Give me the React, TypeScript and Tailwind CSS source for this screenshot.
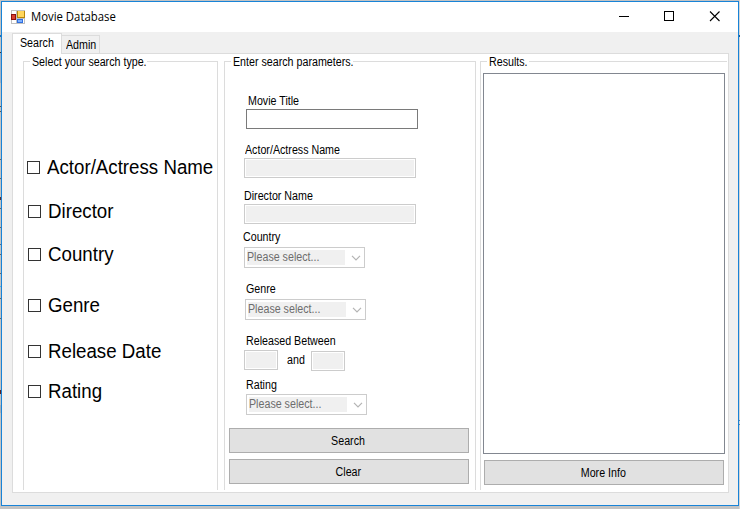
import React from "react";

function Txt({ children }: { children: React.ReactNode }) {
  return <span className="inline-block origin-left scale-x-[0.89]">{children}</span>;
}

function Check({ label, className }: { label: string; className: string }) {
  return (
    <label className={`flex h-[25px] items-center text-[20px] leading-[25px] whitespace-nowrap ${className}`}>
      <span className="mr-[7px] h-[13px] w-[13px] shrink-0 border border-[#333333] bg-white" />
      <span className="inline-block origin-left scale-x-[0.935]">{label}</span>
    </label>
  );
}

function Label({ text, className }: { text: string; className: string }) {
  return (
    <div className={`h-[13px] leading-[13px] whitespace-nowrap ${className}`}>
      <Txt>{text}</Txt>
    </div>
  );
}

function DisabledInput({ className }: { className: string }) {
  return (
    <div className={`h-[20px] border border-[#cccccc] bg-white p-px ${className}`}>
      <div className="h-full bg-[#f0f0f0]" />
    </div>
  );
}

function Select({ className }: { className: string }) {
  return (
    <div className={`flex h-[21px] w-[121px] items-center border border-[#cccccc] bg-white pl-[2px] ${className}`}>
      <div className="h-[15px] w-[98px] bg-[#f0f0f0] leading-[14px] whitespace-nowrap text-[#6d6d6d]">
        <Txt>Please select...</Txt>
      </div>
      <svg className="ml-[6px]" width="10" height="6" viewBox="0 0 10 6" fill="none" stroke="#b4b4b4" strokeWidth="1.2">
        <path d="M1 0.8 L5 4.8 L9 0.8" />
      </svg>
    </div>
  );
}

function Button({ label, className }: { label: string; className: string }) {
  return (
    <button
      className={`flex h-[25px] w-[240px] items-center justify-center border border-[#adadad] bg-[#e1e1e1] pt-[2px] pr-[2px] leading-[13px] ${className}`}
    >
      <span className="inline-block scale-x-[0.89]">{label}</span>
    </button>
  );
}

export default function App() {
  return (
    <div className="flex h-[509px] w-[740px] bg-[#c3c3c3] font-['Liberation_Sans',Arial,sans-serif] text-[12px] text-black">
      {/* slivers of the windows behind, visible along the edges */}
      <div className="w-px shrink-0">
        <div className="mt-[35px] h-[2px] bg-[#1f6fb5]" />
        <div className="mt-[15px] h-px bg-[#333333]" />
        <div className="h-[30px] bg-[#9fb0c4]" />
        <div className="mt-[23px] h-px bg-[#555555]" />
        <div className="mt-[4px] h-px bg-[#555555]" />
        <div className="mt-[47px] h-px bg-[#666666]" />
        <div className="mt-[18px] h-px bg-[#666666]" />
        <div className="mt-[18px] h-[3px] bg-[#5a3030]" />
        <div className="mt-[8px] h-px bg-[#666666]" />
        <div className="mt-[18px] h-px bg-[#666666]" />
        <div className="mt-[16px] h-px bg-[#4a6f90]" />
        <div className="mt-[9px] h-px bg-[#666666]" />
        <div className="mt-[18px] h-px bg-[#666666]" />
        <div className="mt-[12px] h-px bg-[#4fb0e8]" />
        <div className="mt-[11px] h-px bg-[#666666]" />
        <div className="mt-[19px] h-px bg-[#666666]" />
        <div className="mt-[71px] h-[4px] bg-[#5a2020]" />
        <div className="mt-[11px] h-[8px] bg-[#a9b0b8]" />
      </div>
      <div className="mt-px flex h-[505px] w-[738px] shrink-0 flex-col border border-[#1883d7] bg-[#f0f0f0]">
        <div className="flex h-[30px] shrink-0 items-center bg-white pl-[9px]">
          <svg width="14" height="14" viewBox="0 0 14 14" shapeRendering="crispEdges">
            <rect width="14" height="14" fill="#c0c0c0" />
            <rect x="1" y="1" width="4" height="3" fill="#fff" />
            <rect x="1" y="10" width="4" height="3" fill="#fff" />
            <rect x="12" y="9" width="1" height="4" fill="#fff" />
            <rect x="0" y="4" width="5" height="6" fill="#8c1010" />
            <rect x="1" y="5" width="3" height="4" fill="#d8402f" />
            <rect x="6" y="1" width="8" height="7" fill="#b8860b" />
            <rect x="7" y="1" width="6" height="6" fill="#ffd65c" />
            <rect x="6" y="9" width="6" height="4" fill="#2f6fe0" />
            <rect x="7" y="10" width="4" height="2" fill="#7db0ff" />
          </svg>
          <span className="ml-[6px] inline-block origin-left scale-x-[0.945] font-['Open_Sans','Noto_Sans',sans-serif] text-[12px] leading-[16px] whitespace-nowrap">
            Movie Database
          </span>
          <svg className="mr-[17px] ml-auto" width="102" height="12" viewBox="0 0 102 12" fill="none" stroke="#000">
            <path d="M0 5.5 H10" shapeRendering="crispEdges" />
            <rect x="45.5" y="0.5" width="9" height="9" shapeRendering="crispEdges" />
            <path d="M91 0.5 L100.5 10 M100.5 0.5 L91 10" strokeWidth="1.1" />
          </svg>
        </div>

        <div className="flex h-[21px] shrink-0 items-end pl-[10px]">
          <div className="h-[20px] w-[50px] border border-b-0 border-[#dcdcdc] bg-white pt-[3px] pl-[7px] leading-[13px]">
            <Txt>Search</Txt>
          </div>
          <div className="h-[18px] w-[38px] border border-b-0 border-l-0 border-[#dcdcdc] pt-[3px] pl-[4px] leading-[13px]">
            <Txt>Admin</Txt>
          </div>
        </div>

        <div className="ml-[10px] flex h-[440px] w-[717px] flex-col border border-t-0 border-[#dcdcdc] bg-white">
          <div className="flex h-px shrink-0">
            <div className="w-[48px]" />
            <div className="grow bg-[#dcdcdc]" />
          </div>
          <div className="flex pl-[10px]">
            <fieldset className="h-[436px] w-[195px] min-w-0 shrink-0 border border-b-0 border-[#dcdcdc]">
              <legend className="ml-[6px] h-[15px] w-[117px] pl-[2px] leading-[17px] whitespace-nowrap">
                <Txt>Select your search type.</Txt>
              </legend>
              <Check label="Actor/Actress Name" className="mt-[86px] ml-[3px]" />
              <Check label="Director" className="mt-[19px] ml-[4px]" />
              <Check label="Country" className="mt-[18px] ml-[4px]" />
              <Check label="Genre" className="mt-[26px] ml-[4px]" />
              <Check label="Release Date" className="mt-[21px] ml-[4px]" />
              <Check label="Rating" className="mt-[15px] ml-[4px]" />
            </fieldset>

            <fieldset className="ml-[6px] h-[436px] w-[252px] min-w-0 shrink-0 border border-b-0 border-[#dcdcdc]">
              <legend className="ml-[6px] h-[15px] w-[122px] pl-[2px] leading-[17px] whitespace-nowrap">
                <Txt>Enter search parameters.</Txt>
              </legend>
              <Label text="Movie Title" className="mt-[26px] ml-[23px]" />
              <div className="mt-px ml-[21px] h-[20px] w-[172px] border border-[#7a7a7a] bg-white" />
              <Label text="Actor/Actress Name" className="mt-[15px] ml-[20px]" />
              <DisabledInput className="mt-px ml-[19px] w-[172px]" />
              <Label text="Director Name" className="mt-[12px] ml-[19px]" />
              <DisabledInput className="mt-px ml-[19px] w-[172px]" />
              <Label text="Country" className="mt-[7px] ml-[18px]" />
              <Select className="mt-[3px] ml-[19px]" />
              <Label text="Genre" className="mt-[15px] ml-[21px]" />
              <Select className="mt-[3px] ml-[20px]" />
              <Label text="Released Between" className="mt-[15px] ml-[21px]" />
              <div className="mt-[2px] ml-[19px] flex h-[21px] items-start">
                <DisabledInput className="w-[34px]" />
                <span className="mt-[4px] ml-[9px] w-[24px] leading-[13px]">
                  <Txt>and</Txt>
                </span>
                <DisabledInput className="mt-px w-[34px]" />
              </div>
              <Label text="Rating" className="mt-[8px] ml-[21px]" />
              <Select className="mt-[2px] ml-[21px]" />
              <Button label="Search" className="mt-[13px] ml-[4px]" />
              <Button label="Clear" className="mt-[6px] ml-[4px]" />
            </fieldset>

            <fieldset className="ml-[4px] h-[436px] w-[247px] min-w-0 shrink-0 border border-r-0 border-b-0 border-[#dcdcdc]">
              <legend className="ml-[6px] h-[15px] w-[42px] pl-[2px] leading-[17px] whitespace-nowrap">
                <Txt>Results.</Txt>
              </legend>
              <div className="mt-[4px] ml-[2px] h-[381px] w-[242px] border border-[#828790] bg-white" />
              <Button label="More Info" className="mt-[6px] ml-[3px]" />
            </fieldset>
          </div>
        </div>
      </div>
      <div className="w-px shrink-0 bg-[#d6d6d6]">
        <div className="mt-[35px] h-[2px] bg-[#1f5f95]" />
        <div className="mt-[383px] h-px bg-[#4f88b8]" />
        <div className="mt-[3px] h-px bg-[#4f88b8]" />
      </div>
    </div>
  );
}
